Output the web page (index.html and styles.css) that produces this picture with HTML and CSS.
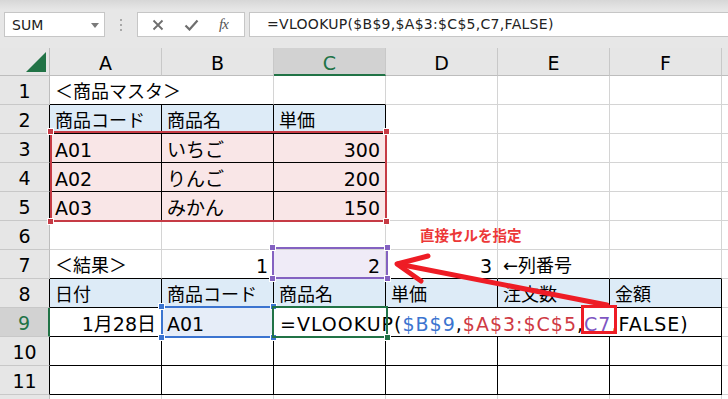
FILE: index.html
```html
<!DOCTYPE html>
<html lang="ja">
<head>
  <meta charset="UTF-8">
  <meta name="viewport" content="width=device-width, initial-scale=1.0">
  <title>VLOOKUP</title>
  <link rel="stylesheet" href="styles.css">
</head>
<body>
  <div class="app">
    <div class="topbar">
      <div class="namebox">
        <span>SUM</span>
        <svg class="drop" width="8" height="5" viewBox="0 0 8 5"><path d="M0 0 H8 L4 5 Z" fill="#7a7a7a"/></svg>
      </div>
      <div class="grip"><i></i><i></i><i></i></div>
      <div class="btns">
        <svg width="12" height="12" viewBox="0 0 12 12"><path d="M1.5 1.5 L10.5 10.5 M10.5 1.5 L1.5 10.5" stroke="#6e6e6e" stroke-width="1.8"/></svg>
        <svg width="15" height="12" viewBox="0 0 15 12"><path d="M1.5 6.5 L5.5 10.5 L13.5 1.5" stroke="#6e6e6e" stroke-width="2.2" fill="none"/></svg>
        <span class="fx">fx</span>
      </div>
      <div class="fbox">=VLOOKUP($B$9,$A$3:$C$5,C7,FALSE)</div>
    </div>

    <div class="sheet">
      <!-- column headers -->
      <div class="corner"><svg width="20" height="20" viewBox="0 0 20 20"><path d="M20 0 V20 H0 Z" fill="#217346"/></svg></div>
      <div class="ch">A</div>
      <div class="ch">B</div>
      <div class="ch sel">C</div>
      <div class="ch">D</div>
      <div class="ch">E</div>
      <div class="ch">F</div>
      <div class="ch"></div>

      <!-- 1 -->
      <div class="rh">1</div>
      <div class="c kb span2">＜商品マスタ＞</div>
      <div class="c kb"></div>
      <div class="c"></div><div class="c"></div><div class="c"></div><div class="c"></div>

      <!-- 2 -->
      <div class="rh kr">2</div>
      <div class="c t hd">商品コード</div>
      <div class="c t hd">商品名</div>
      <div class="c t hd">単価</div>
      <div class="c"></div><div class="c"></div><div class="c"></div><div class="c"></div>

      <!-- 3 -->
      <div class="rh kr">3</div>
      <div class="c t pk">A01</div>
      <div class="c t pk">いちご</div>
      <div class="c t pk r">300</div>
      <div class="c"></div><div class="c"></div><div class="c"></div><div class="c"></div>

      <!-- 4 -->
      <div class="rh kr">4</div>
      <div class="c t pk">A02</div>
      <div class="c t pk">りんご</div>
      <div class="c t pk r">200</div>
      <div class="c"></div><div class="c"></div><div class="c"></div><div class="c"></div>

      <!-- 5 -->
      <div class="rh kr">5</div>
      <div class="c t pk">A03</div>
      <div class="c t pk">みかん</div>
      <div class="c t pk r">150</div>
      <div class="c"></div><div class="c"></div><div class="c"></div><div class="c"></div>

      <!-- 6 -->
      <div class="rh">6</div>
      <div class="c"></div><div class="c"></div><div class="c"></div><div class="c"></div><div class="c"></div><div class="c"></div><div class="c"></div>

      <!-- 7 -->
      <div class="rh">7</div>
      <div class="c kb">＜結果＞</div>
      <div class="c kb r">1</div>
      <div class="c kb r pu">2</div>
      <div class="c kb r">3</div>
      <div class="c kb">←列番号</div>
      <div class="c kb"></div>
      <div class="c"></div>

      <!-- 8 -->
      <div class="rh kr">8</div>
      <div class="c t hd">日付</div>
      <div class="c t hd">商品コード</div>
      <div class="c t hd">商品名</div>
      <div class="c t hd">単価</div>
      <div class="c t hd">注文数</div>
      <div class="c t hd">金額</div>
      <div class="c"></div>

      <!-- 9 -->
      <div class="rh selrow">9</div>
      <div class="c t r">1月28日</div>
      <div class="c t bl">A01</div>
      <div class="c t span4 edit">=VLOOKUP(<span class="ref-b">$B$9</span>,<span class="ref-r">$A$3:$C$5</span>,<span class="ref-p">C7</span>,FALSE)</div>
      <div class="c"></div>

      <!-- 10 -->
      <div class="rh kr">10</div>
      <div class="c t"></div><div class="c t"></div><div class="c t"></div><div class="c t"></div><div class="c t"></div><div class="c t"></div>
      <div class="c"></div>

      <!-- 11 -->
      <div class="rh kr">11</div>
      <div class="c t"></div><div class="c t"></div><div class="c t"></div><div class="c t"></div><div class="c t"></div><div class="c t"></div>
      <div class="c"></div>

      <!-- 12 (only its top edge shows) -->
      <div class="rh"></div>
      <div class="c"></div><div class="c"></div><div class="c"></div><div class="c"></div><div class="c"></div><div class="c"></div><div class="c"></div>
    </div>

    <!-- range highlights drawn over the grid -->
    <div class="hl hl-red"><i class="h tl"></i><i class="h tr"></i><i class="h bl-h"></i><i class="h br"></i></div>
    <div class="hl hl-purple"><i class="h tl"></i><i class="h tr"></i><i class="h bl-h"></i><i class="h br"></i></div>
    <div class="hl hl-blue"><i class="h tl"></i><i class="h tr"></i><i class="h bl-h"></i><i class="h br"></i></div>
    <div class="hl active"><i class="h br"></i></div>

    <div class="callout-box"></div>
    <div class="note">直接セルを指定</div>
    <svg class="arrow" width="728" height="399" viewBox="0 0 728 399">
      <path d="M607 305 L398 264" stroke="#ee1c25" stroke-width="5" stroke-linecap="round" fill="none"/>
      <path d="M428 256 L397 264 L421 281" stroke="#ee1c25" stroke-width="5" stroke-linecap="round" stroke-linejoin="round" fill="none"/>
    </svg>
  </div>
</body>
</html>
```

FILE: styles.css
```css
body {
  margin: 0;
  padding: 0;
  width: 728px;
  height: 399px;
  overflow: hidden;
  background: #fff;
  font-family: "DejaVu Sans", "Noto Sans CJK JP", sans-serif;
  color: #000;
}

.app {
  position: relative;
  width: 728px;
  height: 399px;
  overflow: hidden;
}

/* formula bar */
.topbar {
  height: 48px;
  box-sizing: border-box;
  padding-top: 12px;
  display: flex;
  align-items: flex-start;
  background: linear-gradient(#d7d7d7, #e7e7e7 10px, #e7e7e7);
}

.namebox {
  margin-left: 4px;
  width: 101px;
  height: 25px;
  box-sizing: border-box;
  background: #fff;
  border: 1px solid #c6c6c6;
  display: flex;
  align-items: center;
  justify-content: space-between;
  padding: 0 5px 0 7px;
  font-size: 14px;
  color: #222;
}

.namebox .drop {
  margin-top: 1px;
}

.grip {
  width: 32px;
  height: 25px;
  display: flex;
  flex-direction: column;
  align-items: center;
  justify-content: center;
  gap: 3px;
}

.grip i {
  width: 2px;
  height: 2px;
  background: #a8a8a8;
}

.btns {
  width: 108px;
  height: 25px;
  box-sizing: border-box;
  background: #fff;
  border: 1px solid #c6c6c6;
  display: flex;
  align-items: center;
  justify-content: space-around;
  padding: 0 6px 0 4px;
}

.fx {
  font-family: "Liberation Serif", serif;
  font-style: italic;
  font-size: 15px;
  color: #555;
  letter-spacing: -1px;
}

.fbox {
  flex: 1;
  margin-left: 4px;
  height: 25px;
  box-sizing: border-box;
  background: #fff;
  border: 1px solid #c6c6c6;
  border-right: none;
  padding-left: 17px;
  font-size: 14px;
  line-height: 23px;
  letter-spacing: 0.3px;
  color: #222;
  white-space: nowrap;
}

/* grid */
.sheet {
  display: grid;
  grid-template-columns: 50px repeat(6, 112px) 1fr;
  grid-template-rows: 28px;
  grid-auto-rows: 29px;
  font-size: 18px;
}

.sheet > div {
  box-sizing: border-box;
  white-space: nowrap;
}

.corner {
  background: #e6e6e6;
  border-right: 1px solid #bdbdbd;
  border-bottom: 1px solid #bdbdbd;
  display: flex;
  align-items: flex-end;
  justify-content: flex-end;
  padding: 0 3px 3px 0;
}

.ch {
  background: #e6e6e6;
  border-right: 1px solid #c8c8c8;
  border-bottom: 1px solid #bdbdbd;
  text-align: center;
  font-size: 19px;
  line-height: 24px;
  padding-top: 3px;
}

.ch.sel {
  background: #d2d2d2;
  color: #217346;
  border-bottom: 2px solid #217346;
}

.rh {
  background: #e6e6e6;
  border-right: 1px solid #bdbdbd;
  border-bottom: 1px solid #c8c8c8;
  text-align: center;
  font-size: 19px;
  line-height: 24px;
  padding-top: 3px;
}

.rh.kr {
  border-right-color: #000;
}

.rh.selrow {
  background: #d2d2d2;
  color: #217346;
  border-right: 2px solid #217346;
}

.c {
  border-right: 1px solid #d4d4d4;
  border-bottom: 1px solid #d4d4d4;
  padding: 4px 5px 0 5px;
  line-height: 24px;
}

.c.t {
  border-right-color: #000;
  border-bottom-color: #000;
}

.c.kb {
  border-bottom-color: #000;
}

.r {
  text-align: right;
}

.hd {
  background: #ddebf7;
}

.pk {
  background: #f9e6e7;
}

.pu {
  background: #efebf7;
}

.bl {
  background: #e6edf8;
}

.span2 {
  grid-column: span 2;
}

.span4 {
  grid-column: span 4;
}

.pk, .r, .bl, .edit {
  font-size: 19px;
}

.edit {
  background: #fff;
  letter-spacing: 1px;
  padding-left: 6px;
}

.ref-b {
  color: #3b74d0;
}

.ref-r {
  color: #cf3a44;
}

.ref-p {
  color: #7f56c2;
}

/* reference highlights */
.hl {
  position: absolute;
  box-sizing: border-box;
  border: 2px solid;
}

.hl-red {
  left: 50px;
  top: 131px;
  width: 337px;
  height: 91px;
  border-color: #c63b45;
}

.hl-purple {
  left: 272px;
  top: 247px;
  width: 116px;
  height: 32px;
  border-color: #8462c1;
}

.hl-blue {
  left: 161px;
  top: 306px;
  width: 113px;
  height: 32px;
  border-color: #3b74d0;
}

.active {
  left: 272px;
  top: 306px;
  width: 116px;
  height: 32px;
  border-color: #217346;
}

.h {
  position: absolute;
  width: 5px;
  height: 5px;
  background: inherit;
  border: 1px solid #fff;
}

.hl-red .h { background: #c63b45; }
.hl-purple .h { background: #8462c1; }
.hl-blue .h { background: #3b74d0; }
.active .h { background: #217346; }

.h.tl { left: -5px; top: -5px; }
.h.tr { right: -5px; top: -5px; }
.h.bl-h { left: -5px; bottom: -5px; }
.h.br { right: -5px; bottom: -5px; }

/* annotation */
.callout-box {
  position: absolute;
  left: 581px;
  top: 305px;
  width: 36px;
  height: 29px;
  box-sizing: border-box;
  border: 3px solid #ee1c25;
}

.note {
  position: absolute;
  left: 420px;
  top: 227px;
  font-family: "Noto Sans CJK JP", sans-serif;
  font-weight: 700;
  font-size: 14.5px;
  line-height: 16px;
  color: #ec3838;
}

.arrow {
  position: absolute;
  left: 0;
  top: 0;
  pointer-events: none;
}
```
